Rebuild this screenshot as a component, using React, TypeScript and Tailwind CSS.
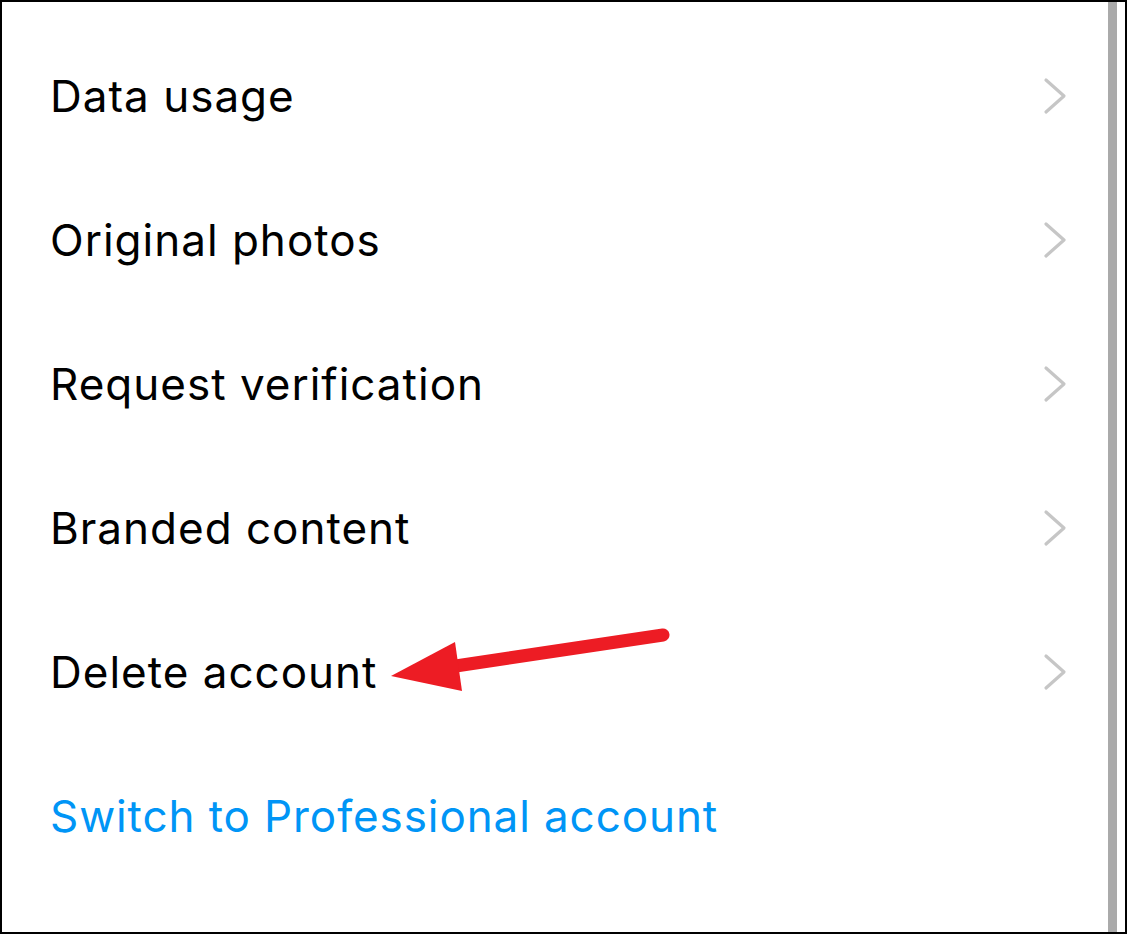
import React from "react";

const items = ["Data usage", "Original photos", "Request verification", "Branded content", "Delete account"];

function Chevron() {
  return (
    <svg width="24" height="38" viewBox="0 0 24 38" className="shrink-0">
      <polyline points="3,3 21,19 3,35" fill="none" stroke="#c6c6c6" strokeWidth="3.2" strokeLinecap="round" strokeLinejoin="round" />
    </svg>
  );
}

export default function App() {
  return (
    <div className="w-[1127px] h-[934px] bg-white border-2 border-black relative flex overflow-hidden" style={{ fontFamily: "Inter, 'Noto Sans', sans-serif" }}>
      <div className="flex-1 flex flex-col pt-[22px]">
        {items.map((t) => (
          <div key={t} className="h-[144px] flex items-center justify-between pl-[48px] pr-[41px]">
            <span className="text-[44px] leading-none text-black tracking-[1px]">{t}</span>
            <Chevron />
          </div>
        ))}
        <div className="h-[144px] flex items-center pl-[48px]">
          <span className="text-[44px] leading-none text-[#0095f6] tracking-[0.9px]">Switch to Professional account</span>
        </div>
      </div>
      <div className="w-[9px] bg-[#aaaaaa] h-full"></div>
      <div className="w-[8px] h-full"></div>
      <svg className="absolute left-0 top-0 pointer-events-none" width="1127" height="934" viewBox="-2 -2 1127 934">
        <line x1="659" y1="631" x2="445" y2="663" stroke="#ed1c24" strokeWidth="13" strokeLinecap="round" />
        <polygon points="387,672 451,638 458,687" fill="#ed1c24" />
      </svg>
    </div>
  );
}
